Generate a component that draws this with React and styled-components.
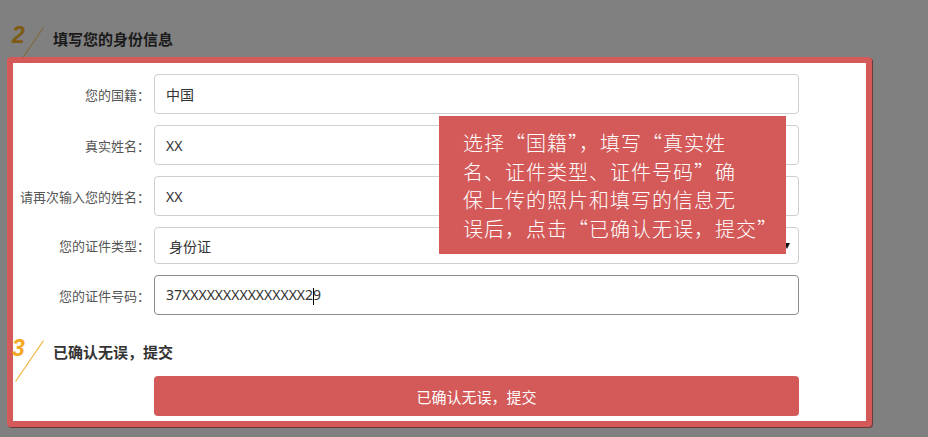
import React from "react";
import styled, { createGlobalStyle } from "styled-components";

const GlobalStyle = createGlobalStyle`
  html, body { margin: 0; padding: 0; }
  body { font-family: "Noto Sans", "Noto Sans CJK SC", sans-serif; }
  * { box-sizing: border-box; }
`;

const RED = "#d45a59";

const Page = styled.div`
  width: 928px;
  height: 437px;
  background: #808080;
  overflow: hidden;
  padding-top: 27px;
`;

const StepHeader = styled.div`
  display: flex;
  align-items: flex-start;
  height: ${(p) => p.$h}px;
  margin-left: ${(p) => p.$ml}px;
  margin-top: ${(p) => p.$mt || 0}px;
`;

const Mark = styled.div`
  position: relative;
  width: 41px;
  height: 42px;
  flex: none;
`;

const StepNum = styled.span`
  position: absolute;
  left: 0;
  top: -3px;
  font-family: "Liberation Sans", Arial, sans-serif;
  font-weight: bold;
  font-style: italic;
  font-size: 23px;
  line-height: 23px;
  color: ${(p) => (p.$dim ? "#7e5a14" : "#f5a623")};
`;

const Slash = styled.svg`
  position: absolute;
  left: 3px;
  top: 0;
`;

const StepTitle = styled.h2`
  margin: 0;
  font-family: "Noto Sans CJK SC", sans-serif;
  font-size: 15px;
  font-weight: bold;
  line-height: 24px;
  color: ${(p) => (p.$dim ? "#1a1a1a" : "#333")};
`;

const Panel = styled.div`
  position: relative;
  margin-left: 7px;
  width: 865px;
  height: 370px;
  border: 6px solid ${RED};
  border-radius: 4px;
  background: #fff;
  box-shadow: 1px 1px 0 #6b3a3a;
  padding-top: 11px;
`;

const Form = styled.div`
  display: flex;
  flex-direction: column;
  gap: 11px;
`;

const FieldRow = styled.div`
  display: grid;
  grid-template-columns: 137px 645px;
  column-gap: 4px;
  align-items: center;
  height: ${(p) => p.$h}px;
`;

const Label = styled.label`
  text-align: right;
  font-size: 13px;
  color: #555;
  font-family: "Noto Sans CJK SC", sans-serif;
  white-space: nowrap;
`;

const InputBox = styled.div`
  height: 100%;
  display: flex;
  align-items: center;
  border: 1px solid ${(p) => (p.$focus ? "#8c8c8c" : "#cfcfcf")};
  border-radius: 4px;
  padding-left: ${(p) => p.$pl || 11}px;
  padding-right: 8px;
  font-size: 14px;
  color: #333;
  font-family: "Noto Sans", "Noto Sans CJK SC", sans-serif;
  background: #fff;
`;

const SelectText = styled.span`
  flex: 1;
`;

const Caret = styled.span`
  display: inline-block;
  width: 1px;
  height: 17px;
  background: #000;
  vertical-align: middle;
  margin: 0 -0.5px;
`;

const Arrow = styled.span`
  width: 0;
  height: 0;
  border-left: 3.5px solid transparent;
  border-right: 3.5px solid transparent;
  border-top: 6px solid #111;
`;

const SubmitButton = styled.button`
  display: block;
  margin-left: 141px;
  width: 645px;
  height: 40px;
  border: none;
  border-radius: 4px;
  background: ${RED};
  color: #fff;
  font-size: 15px;
  font-family: "Noto Sans CJK SC", sans-serif;
  cursor: pointer;
`;

const Tooltip = styled.div`
  position: absolute;
  left: 426px;
  top: 53px;
  width: 347px;
  height: 138px;
  background: ${RED};
  padding: 13px 0 0 24px;
  color: #fff;
  font-family: "Noto Sans CJK SC", sans-serif;
  font-weight: 300;
  font-size: 20px;
  letter-spacing: 1px;
  line-height: 28.5px;
`;

const TipLine = styled.div`
  white-space: nowrap;
`;

function SlashMark({ num, dim }) {
  return (
    <Mark>
      <Slash width="30" height="42" viewBox="0 0 30 42">
        <line
          x1="28.5"
          y1="0.5"
          x2="0.5"
          y2="41.5"
          stroke={dim ? "#86683a" : "#f2b23c"}
          strokeWidth="1.2"
        />
      </Slash>
      <StepNum $dim={dim}>{num}</StepNum>
    </Mark>
  );
}

export default function App() {
  return (
    <>
      <GlobalStyle />
      <Page>
        <StepHeader $h={30} $ml={12}>
          <SlashMark num="2" dim />
          <StepTitle $dim>填写您的身份信息</StepTitle>
        </StepHeader>
        <Panel>
          <Form>
            <FieldRow $h={40}>
              <Label>您的国籍：</Label>
              <InputBox>中国</InputBox>
            </FieldRow>
            <FieldRow $h={40}>
              <Label>真实姓名：</Label>
              <InputBox>XX</InputBox>
            </FieldRow>
            <FieldRow $h={40}>
              <Label>请再次输入您的姓名：</Label>
              <InputBox>XX</InputBox>
            </FieldRow>
            <FieldRow $h={37}>
              <Label>您的证件类型：</Label>
              <InputBox $pl={14}>
                <SelectText>身份证</SelectText>
                <Arrow />
              </InputBox>
            </FieldRow>
            <FieldRow $h={40}>
              <Label>您的证件号码：</Label>
              <InputBox $focus>
                <span>
                  37XXXXXXXXXXXXXXX2<Caret />9
                </span>
              </InputBox>
            </FieldRow>
          </Form>
          <StepHeader $h={36} $ml={-1} $mt={25}>
            <SlashMark num="3" />
            <StepTitle>已确认无误，提交</StepTitle>
          </StepHeader>
          <SubmitButton>已确认无误，提交</SubmitButton>
          <Tooltip>
            <TipLine>选择“国籍”，填写“真实姓</TipLine>
            <TipLine>名、证件类型、证件号码”确</TipLine>
            <TipLine>保上传的照片和填写的信息无</TipLine>
            <TipLine>误后，点击“已确认无误，提交”</TipLine>
          </Tooltip>
        </Panel>
      </Page>
    </>
  );
}
